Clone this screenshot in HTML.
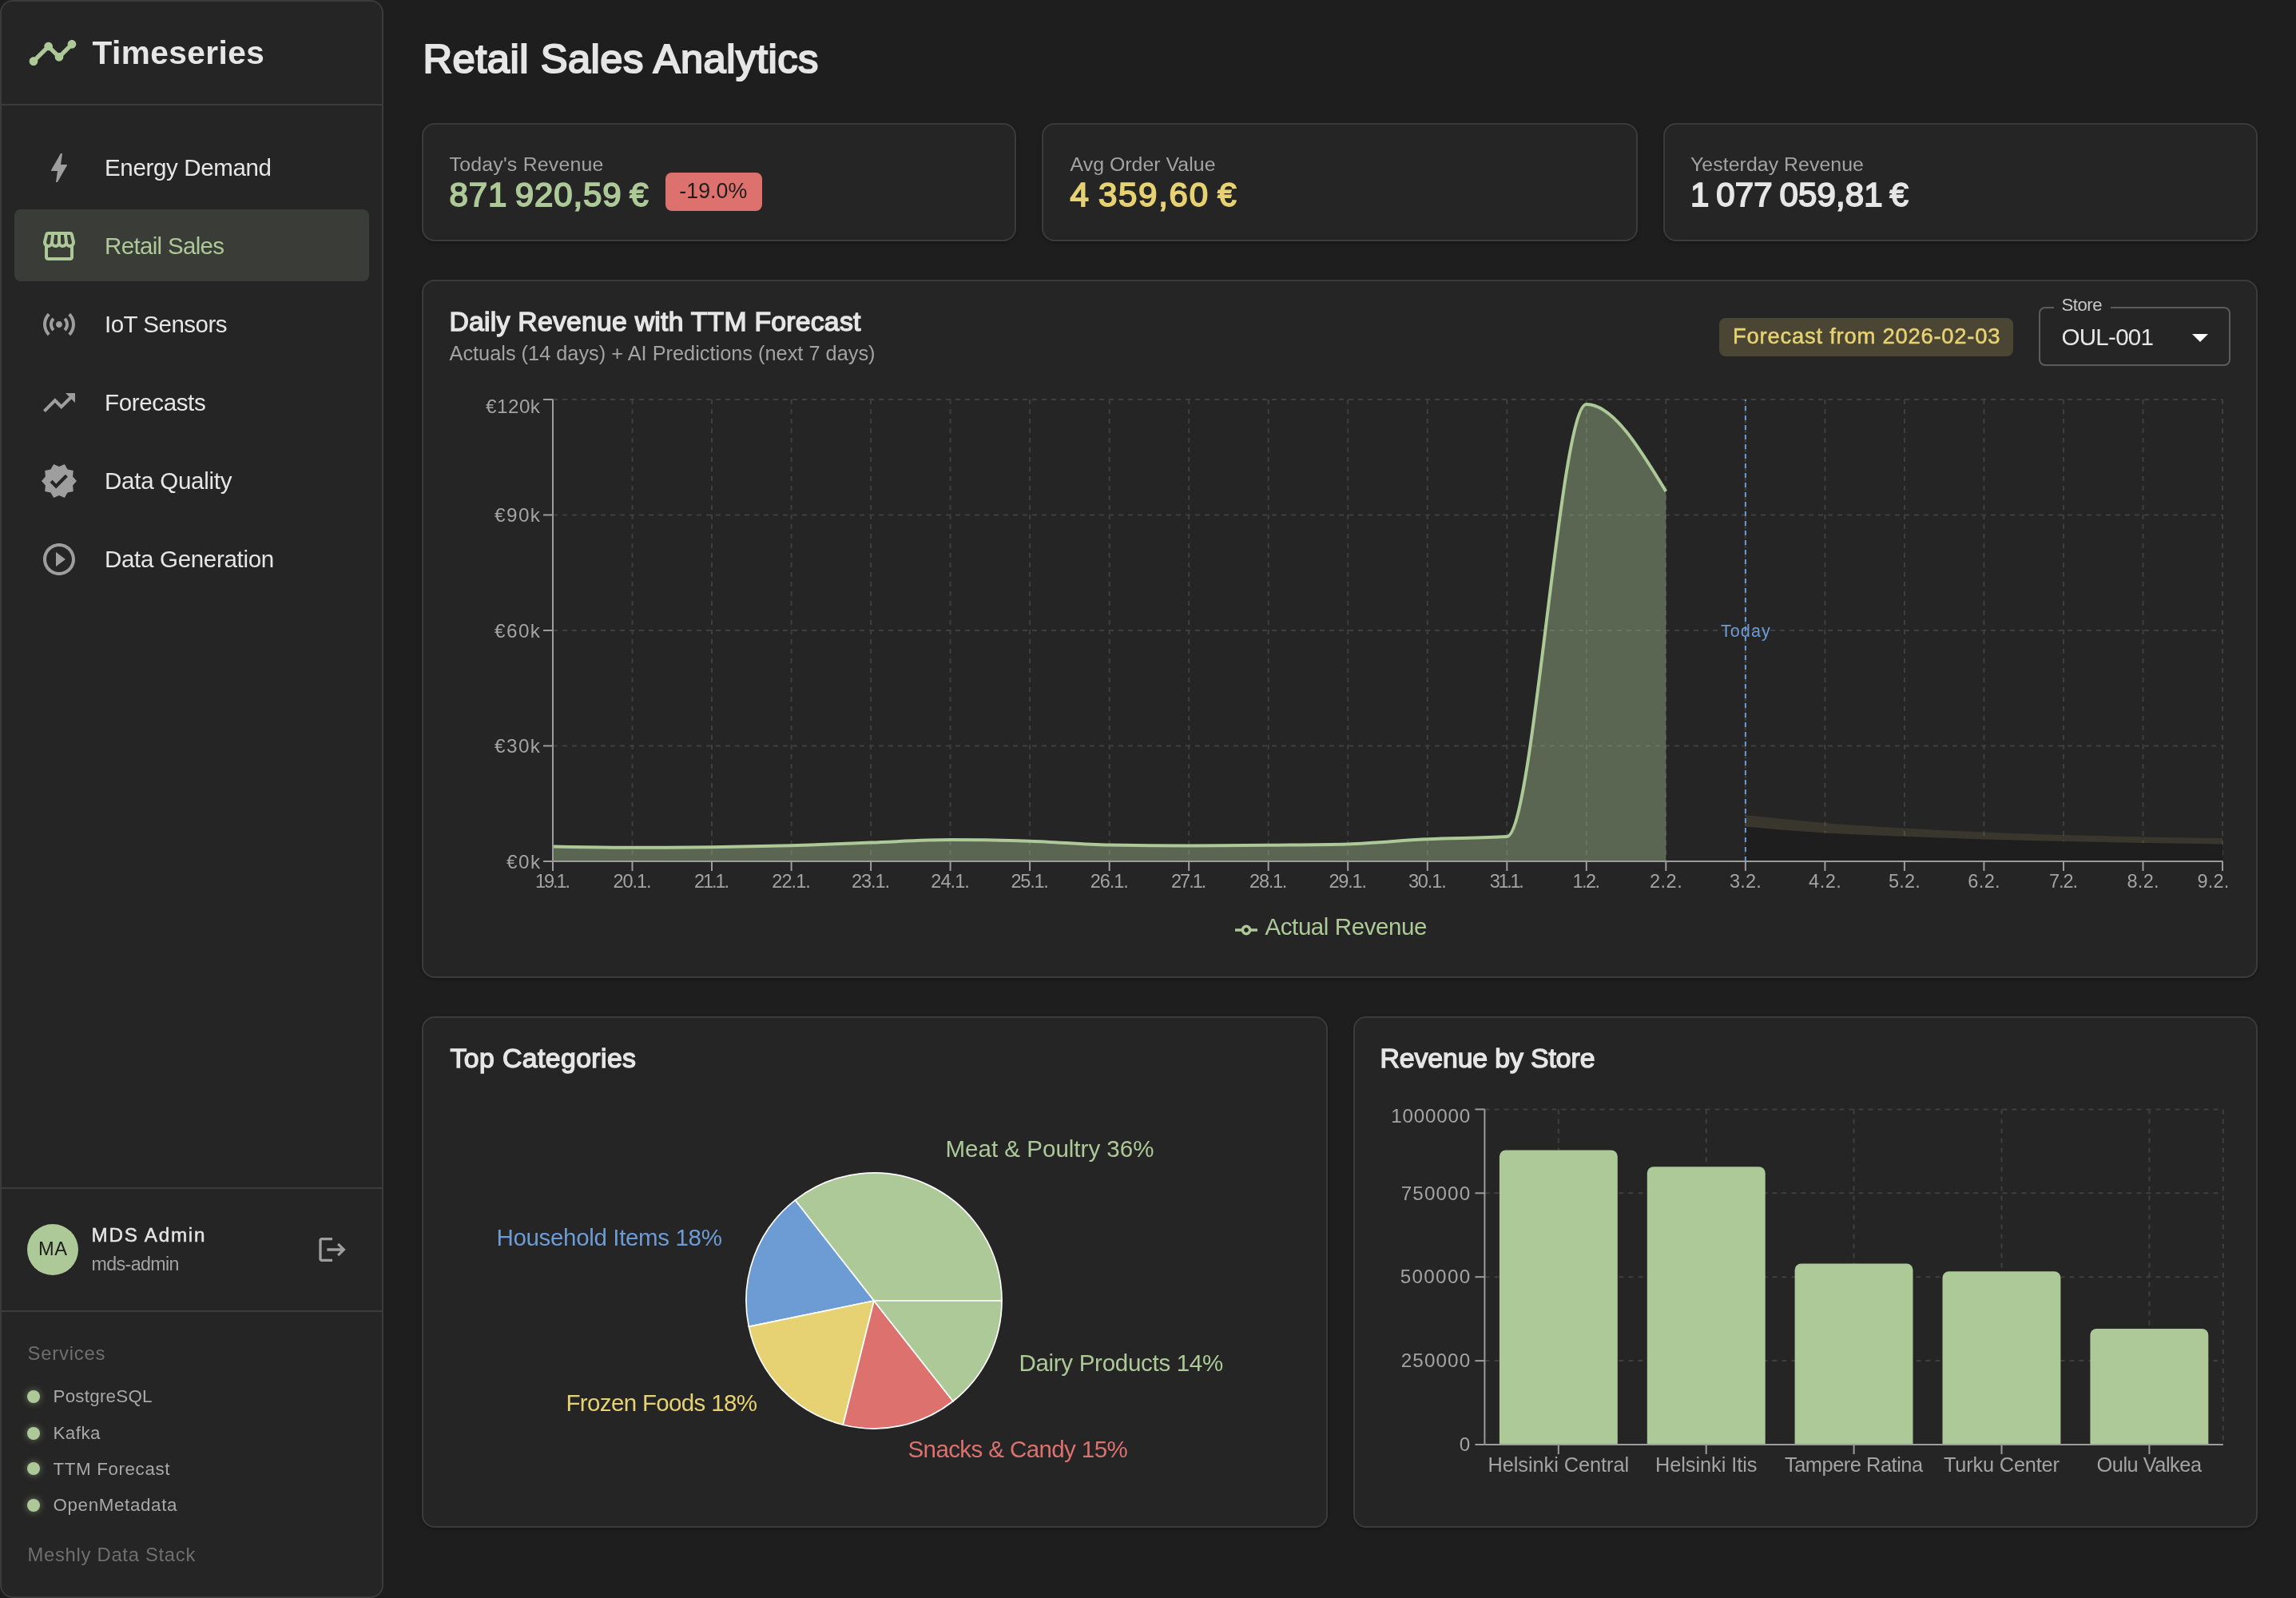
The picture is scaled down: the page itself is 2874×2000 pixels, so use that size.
<!DOCTYPE html>
<html lang="en"><head><meta charset="utf-8"><title>Retail Sales Analytics</title>
<style>
html,body{margin:0;padding:0;background:#1e1e1e;}
body{width:2874px;height:2000px;position:relative;overflow:hidden;font-family:"Liberation Sans",sans-serif;}
div{box-sizing:content-box;}
#app{position:absolute;left:0;top:0;width:2874px;height:2000px;will-change:transform;}
.t{position:absolute;white-space:pre;line-height:1;}
</style></head><body><div id="app">
<div class="" style="position:absolute;left:0px;top:0px;width:476px;height:1996px;background:#252525;border:2px solid #3b3b3b;border-radius:16px;"></div>
<div class="" style="position:absolute;left:2px;top:130px;width:476px;height:2px;background:#3b3b3b;"></div>
<div class="" style="position:absolute;left:2px;top:1486px;width:476px;height:2px;background:#3b3b3b;"></div>
<div class="" style="position:absolute;left:2px;top:1640px;width:476px;height:2px;background:#3b3b3b;"></div>
<svg style="position:absolute;left:34px;top:34px" width="64" height="64" viewBox="0 0 24 24"><path fill="#adc997" d="M23 8c0 1.1-.9 2-2 2-.18 0-.35-.02-.51-.07l-3.56 3.55c.05.16.07.34.07.52 0 1.1-.9 2-2 2s-2-.9-2-2c0-.18.02-.36.07-.52l-2.55-2.55c-.16.05-.34.07-.52.07s-.36-.02-.52-.07l-4.55 4.56c.05.16.07.33.07.51 0 1.1-.9 2-2 2s-2-.9-2-2 .9-2 2-2c.18 0 .35.02.51.07l4.56-4.55C8.02 9.36 8 9.18 8 9c0-1.1.9-2 2-2s2 .9 2 2c0 .18-.02.36-.07.52l2.55 2.55c.16-.05.34-.07.52-.07s.36.02.52.07l3.55-3.56C19.02 8.35 19 8.18 19 8c0-1.1.9-2 2-2s2 .9 2 2z"/></svg>
<div class="t" style="left:115.5px;top:46.1px;font-size:40.6px;color:#e6e6e6;font-weight:700;letter-spacing:0.44px;">Timeseries</div>
<svg style="position:absolute;left:50px;top:186px" width="48" height="48" viewBox="0 0 24 24"><path fill="#9e9e9e" d="M11 21h-1l1-7H7.5c-.58 0-.57-.32-.38-.66.19-.34.05-.08.07-.12C8.48 10.94 10.42 7.54 13 3h1l-1 7h3.5c.49 0 .56.33.47.51l-.07.15C12.96 17.55 11 21 11 21z"/></svg>
<div class="t" style="left:131.0px;top:194.8px;font-size:29.54px;color:#e6e6e6;font-weight:400;letter-spacing:-0.37px;">Energy Demand</div>
<div class="" style="position:absolute;left:18px;top:262px;width:444px;height:90px;background:#3a3d37;border-radius:8px;"></div>
<svg style="position:absolute;left:50px;top:284px" width="48" height="48" viewBox="0 0 24 24"><path fill="#adc997" d="M21.9 8.89l-1.05-4.37c-.22-.9-1-1.52-1.91-1.52H5.05c-.9 0-1.69.63-1.9 1.52L2.1 8.89c-.24 1.02-.02 2.06.62 2.88.08.11.19.19.28.29V19c0 1.1.9 2 2 2h14c1.1 0 2-.9 2-2v-6.94c.09-.09.2-.18.28-.28.64-.82.87-1.87.62-2.89zm-2.99-3.9l1.05 4.37c.1.42.01.84-.25 1.17-.14.18-.44.47-.94.47-.61 0-1.14-.49-1.21-1.14L16.98 5l1.93-.01zM13 5h1.96l.54 4.52c.05.39-.07.78-.33 1.07-.22.26-.54.41-.95.41-.67 0-1.22-.59-1.22-1.31V5zM8.49 9.52L9.04 5H11v4.69c0 .72-.55 1.31-1.29 1.31-.34 0-.65-.15-.89-.41-.25-.29-.37-.68-.33-1.07zm-4.45-.16L5.05 5h1.97l-.58 4.86c-.08.65-.6 1.14-1.21 1.14-.49 0-.8-.29-.93-.47-.27-.32-.36-.75-.26-1.17zM5 19v-6.03c.08.01.15.03.23.03.87 0 1.66-.36 2.24-.95.6.6 1.4.95 2.31.95.87 0 1.65-.36 2.23-.93.59.57 1.39.93 2.29.93.84 0 1.64-.35 2.24-.95.58.59 1.37.95 2.24.95.08 0 .15-.02.23-.03V19H5z"/></svg>
<div class="t" style="left:131.0px;top:292.8px;font-size:29.54px;color:#adc997;font-weight:400;letter-spacing:-0.68px;">Retail Sales</div>
<svg style="position:absolute;left:50px;top:382px" width="48" height="48" viewBox="0 0 24 24"><path fill="#9e9e9e" d="M7.76 16.24C6.67 15.16 6 13.66 6 12s.67-3.16 1.76-4.24l1.42 1.42C8.45 9.9 8 10.9 8 12c0 1.1.45 2.1 1.17 2.83l-1.41 1.41zm8.48 0C17.33 15.16 18 13.66 18 12s-.67-3.16-1.76-4.24l-1.42 1.42C15.55 9.9 16 10.9 16 12c0 1.1-.45 2.1-1.17 2.83l1.41 1.41zM12 10c-1.1 0-2 .9-2 2s.9 2 2 2 2-.9 2-2-.9-2-2-2zm8 2c0 2.21-.9 4.21-2.35 5.65l1.42 1.42C20.88 17.26 22 14.76 22 12s-1.12-5.26-2.93-7.07l-1.42 1.42C19.1 7.79 20 9.79 20 12zM6.35 6.35L4.93 4.93C3.12 6.74 2 9.24 2 12s1.12 5.26 2.93 7.07l1.42-1.42C4.9 16.21 4 14.21 4 12s.9-4.21 2.35-5.65z"/></svg>
<div class="t" style="left:131.0px;top:390.8px;font-size:29.54px;color:#e6e6e6;font-weight:400;letter-spacing:-0.51px;">IoT Sensors</div>
<svg style="position:absolute;left:50px;top:480px" width="48" height="48" viewBox="0 0 24 24"><path fill="#9e9e9e" d="M16 6l2.29 2.29-4.88 4.88-4-4L2 16.59 3.41 18l6-6 4 4 6.3-6.29L22 12V6z"/></svg>
<div class="t" style="left:131.0px;top:488.8px;font-size:29.54px;color:#e6e6e6;font-weight:400;letter-spacing:-0.37px;">Forecasts</div>
<svg style="position:absolute;left:50px;top:578px" width="48" height="48" viewBox="0 0 24 24"><path fill="#9e9e9e" d="M23 12l-2.44-2.79.34-3.69-3.61-.82-1.89-3.2L12 2.96 8.6 1.5 6.71 4.69 3.1 5.5l.34 3.7L1 12l2.44 2.79-.34 3.7 3.61.82L8.6 22.5l3.4-1.47 3.4 1.46 1.89-3.19 3.61-.82-.34-3.69L23 12zm-12.91 4.72l-3.8-3.81 1.48-1.48 2.32 2.33 5.85-5.87 1.48 1.48-7.33 7.35z"/></svg>
<div class="t" style="left:131.0px;top:586.8px;font-size:29.54px;color:#e6e6e6;font-weight:400;letter-spacing:-0.27px;">Data Quality</div>
<svg style="position:absolute;left:50px;top:676px" width="48" height="48" viewBox="0 0 24 24"><path fill="#9e9e9e" d="M10 16.5l6-4.5-6-4.5v9zM12 2C6.48 2 2 6.48 2 12s4.48 10 10 10 10-4.48 10-10S17.52 2 12 2zm0 18c-4.41 0-8-3.59-8-8s3.59-8 8-8 8 3.59 8 8-3.59 8-8 8z"/></svg>
<div class="t" style="left:131.0px;top:684.8px;font-size:29.54px;color:#e6e6e6;font-weight:400;letter-spacing:-0.32px;">Data Generation</div>
<div class="" style="position:absolute;left:34px;top:1532px;width:64px;height:64px;background:#adc997;border-radius:50%;"></div>
<div class="t" style="left:48.0px;top:1552.2px;font-size:23.63px;color:#1e1e1e;font-weight:400;letter-spacing:0.55px;">MA</div>
<div class="t" style="left:114.5px;top:1534.2px;font-size:24.26px;color:#e6e6e6;font-weight:400;letter-spacing:1.74px;-webkit-text-stroke:0.45px #e6e6e6;">MDS Admin</div>
<div class="t" style="left:114.5px;top:1570.9px;font-size:23.21px;color:#a3a3a3;font-weight:400;letter-spacing:-0.60px;">mds-admin</div>
<svg style="position:absolute;left:395.7px;top:1544px" width="40" height="40" viewBox="0 0 24 24"><path fill="#9e9e9e" d="M17 7l-1.41 1.41L18.17 11H8v2h10.17l-2.58 2.58L17 17l5-5zM4 5h8V3H4c-1.1 0-2 .9-2 2v14c0 1.1.9 2 2 2h8v-2H4V5z"/></svg>
<div class="t" style="left:34.5px;top:1681.8px;font-size:23.84px;color:#6f6f6f;font-weight:400;letter-spacing:0.80px;">Services</div>
<div class="" style="position:absolute;left:34px;top:1739.8px;width:16px;height:16px;background:#adc997;border-radius:50%;box-shadow:0 0 8px rgba(173,201,151,.55);"></div>
<div class="t" style="left:66.5px;top:1737.1px;font-size:22.37px;color:#a8a8a8;font-weight:400;letter-spacing:0.24px;">PostgreSQL</div>
<div class="" style="position:absolute;left:34px;top:1785.8px;width:16px;height:16px;background:#adc997;border-radius:50%;box-shadow:0 0 8px rgba(173,201,151,.55);"></div>
<div class="t" style="left:66.5px;top:1783.1px;font-size:22.37px;color:#a8a8a8;font-weight:400;letter-spacing:0.45px;">Kafka</div>
<div class="" style="position:absolute;left:34px;top:1830.3px;width:16px;height:16px;background:#adc997;border-radius:50%;box-shadow:0 0 8px rgba(173,201,151,.55);"></div>
<div class="t" style="left:66.5px;top:1827.6px;font-size:22.37px;color:#a8a8a8;font-weight:400;letter-spacing:0.62px;">TTM Forecast</div>
<div class="" style="position:absolute;left:34px;top:1876.1px;width:16px;height:16px;background:#adc997;border-radius:50%;box-shadow:0 0 8px rgba(173,201,151,.55);"></div>
<div class="t" style="left:66.5px;top:1873.4px;font-size:22.37px;color:#a8a8a8;font-weight:400;letter-spacing:0.64px;">OpenMetadata</div>
<div class="t" style="left:34.5px;top:1933.8px;font-size:23.84px;color:#6f6f6f;font-weight:400;letter-spacing:0.70px;">Meshly Data Stack</div>
<div class="t" style="left:529.5px;top:49.1px;font-size:50.64px;color:#e6e6e6;font-weight:400;letter-spacing:0.52px;-webkit-text-stroke:2.1px #e6e6e6;">Retail Sales Analytics</div>
<div class="" style="position:absolute;left:528px;top:154px;width:740px;height:144px;background:#252525;border:2px solid #3b3b3b;border-radius:16px;box-shadow:0 2px 4px rgba(0,0,0,.25);"></div>
<div class="" style="position:absolute;left:1304px;top:154px;width:742px;height:144px;background:#252525;border:2px solid #3b3b3b;border-radius:16px;box-shadow:0 2px 4px rgba(0,0,0,.25);"></div>
<div class="" style="position:absolute;left:2082px;top:154px;width:740px;height:144px;background:#252525;border:2px solid #3b3b3b;border-radius:16px;box-shadow:0 2px 4px rgba(0,0,0,.25);"></div>
<div class="t" style="left:562.5px;top:193.7px;font-size:24.84px;color:#a3a3a3;font-weight:400;letter-spacing:0.23px;">Today's Revenue</div>
<div class="t" style="left:562.5px;top:223.1px;font-size:42.0px;color:#adc997;font-weight:400;letter-spacing:0.89px;-webkit-text-stroke:1.75px #adc997;word-spacing:-3px;">871 920,59 €</div>
<div class="" style="position:absolute;left:833px;top:216px;width:120.5px;height:48px;background:#dc716e;border-radius:8px;"></div>
<div class="t" style="left:850.2px;top:225.9px;font-size:26.78px;color:#1e1e1e;font-weight:400;letter-spacing:0.07px;">-19.0%</div>
<div class="t" style="left:1339.5px;top:193.7px;font-size:24.84px;color:#a3a3a3;font-weight:400;letter-spacing:0.05px;">Avg Order Value</div>
<div class="t" style="left:1339.5px;top:223.1px;font-size:42.0px;color:#e7d273;font-weight:400;letter-spacing:1.72px;-webkit-text-stroke:1.75px #e7d273;word-spacing:-3px;">4 359,60 €</div>
<div class="t" style="left:2116.0px;top:193.7px;font-size:24.84px;color:#a3a3a3;font-weight:400;letter-spacing:0.07px;">Yesterday Revenue</div>
<div class="t" style="left:2116.0px;top:223.1px;font-size:42.0px;color:#e6e6e6;font-weight:400;letter-spacing:0.13px;-webkit-text-stroke:1.75px #e6e6e6;word-spacing:-3px;">1 077 059,81 €</div>
<div class="" style="position:absolute;left:528px;top:350px;width:2294px;height:870px;background:#252525;border:2px solid #3b3b3b;border-radius:16px;box-shadow:0 2px 4px rgba(0,0,0,.25);"></div>
<div class="t" style="left:562.5px;top:386.4px;font-size:33.76px;color:#e6e6e6;font-weight:400;letter-spacing:0.24px;-webkit-text-stroke:1.4px #e6e6e6;">Daily Revenue with TTM Forecast</div>
<div class="t" style="left:562.5px;top:429.6px;font-size:25.32px;color:#a3a3a3;font-weight:400;letter-spacing:0.01px;">Actuals (14 days) + AI Predictions (next 7 days)</div>
<div class="" style="position:absolute;left:2152px;top:398px;width:368px;height:48px;background:#4a4633;border-radius:8px;"></div>
<div class="t" style="left:2169.0px;top:407.1px;font-size:27.43px;color:#e7d273;font-weight:400;letter-spacing:0.76px;-webkit-text-stroke:0.5px #e7d273;">Forecast from 2026-02-03</div>
<div class="" style="position:absolute;left:2552px;top:384px;width:236px;height:70px;border:2px solid #5c5c5c;border-radius:8px;"></div>
<div class="" style="position:absolute;left:2570.5px;top:380px;width:71px;height:10px;background:#252525;"></div>
<div class="t" style="left:2580.5px;top:370.5px;font-size:22.15px;color:#c8c8c8;font-weight:400;letter-spacing:-0.49px;">Store</div>
<div class="t" style="left:2580.5px;top:407.2px;font-size:29.54px;color:#e6e6e6;font-weight:400;letter-spacing:-0.73px;">OUL-001</div>
<svg style="position:absolute;left:2730px;top:398px" width="48" height="48" viewBox="0 0 24 24"><path fill="#ffffff" d="M7 10l5 5 5-5z"/></svg>
<svg style="position:absolute;left:0;top:0" width="2874" height="2000" viewBox="0 0 2874 2000"><g stroke="#3f3f3f" stroke-width="2" stroke-dasharray="6 6" fill="none"><line x1="692.0" y1="933.5" x2="2782.0" y2="933.5"/><line x1="692.0" y1="789.0" x2="2782.0" y2="789.0"/><line x1="692.0" y1="644.5" x2="2782.0" y2="644.5"/><line x1="692.0" y1="500.0" x2="2782.0" y2="500.0"/><line x1="791.5" y1="500.0" x2="791.5" y2="1078.0"/><line x1="891.0" y1="500.0" x2="891.0" y2="1078.0"/><line x1="990.6" y1="500.0" x2="990.6" y2="1078.0"/><line x1="1090.1" y1="500.0" x2="1090.1" y2="1078.0"/><line x1="1189.6" y1="500.0" x2="1189.6" y2="1078.0"/><line x1="1289.1" y1="500.0" x2="1289.1" y2="1078.0"/><line x1="1388.7" y1="500.0" x2="1388.7" y2="1078.0"/><line x1="1488.2" y1="500.0" x2="1488.2" y2="1078.0"/><line x1="1587.7" y1="500.0" x2="1587.7" y2="1078.0"/><line x1="1687.2" y1="500.0" x2="1687.2" y2="1078.0"/><line x1="1786.8" y1="500.0" x2="1786.8" y2="1078.0"/><line x1="1886.3" y1="500.0" x2="1886.3" y2="1078.0"/><line x1="1985.8" y1="500.0" x2="1985.8" y2="1078.0"/><line x1="2085.3" y1="500.0" x2="2085.3" y2="1078.0"/><line x1="2184.9" y1="500.0" x2="2184.9" y2="1078.0"/><line x1="2284.4" y1="500.0" x2="2284.4" y2="1078.0"/><line x1="2383.9" y1="500.0" x2="2383.9" y2="1078.0"/><line x1="2483.4" y1="500.0" x2="2483.4" y2="1078.0"/><line x1="2583.0" y1="500.0" x2="2583.0" y2="1078.0"/><line x1="2682.5" y1="500.0" x2="2682.5" y2="1078.0"/><line x1="2782.0" y1="500.0" x2="2782.0" y2="1078.0"/></g><path d="M692.00,1059.60C725.17,1060.20,758.35,1060.80,791.52,1060.80C824.70,1060.80,857.87,1060.60,891.05,1060.20C924.22,1059.80,957.40,1059.23,990.57,1058.30C1023.75,1057.37,1056.92,1055.80,1090.10,1054.60C1123.27,1053.40,1156.44,1051.10,1189.62,1051.10C1222.79,1051.10,1255.97,1051.63,1289.14,1052.70C1322.32,1053.77,1355.49,1056.93,1388.67,1057.60C1421.84,1058.27,1455.02,1058.60,1488.19,1058.60C1521.37,1058.60,1554.54,1058.07,1587.71,1057.70C1620.89,1057.33,1654.06,1057.27,1687.24,1056.40C1720.41,1055.53,1753.59,1051.77,1786.76,1050.20C1819.94,1048.63,1853.11,1049.13,1886.29,1047.00C1919.46,1044.87,1952.63,506.00,1985.81,506.00C2018.98,506.00,2052.16,560.50,2085.33,615.00L2085.33,1078.0L692.00,1078.0Z" fill="#adc997" fill-opacity="0.4"/><path d="M692.00,1059.60C725.17,1060.20,758.35,1060.80,791.52,1060.80C824.70,1060.80,857.87,1060.60,891.05,1060.20C924.22,1059.80,957.40,1059.23,990.57,1058.30C1023.75,1057.37,1056.92,1055.80,1090.10,1054.60C1123.27,1053.40,1156.44,1051.10,1189.62,1051.10C1222.79,1051.10,1255.97,1051.63,1289.14,1052.70C1322.32,1053.77,1355.49,1056.93,1388.67,1057.60C1421.84,1058.27,1455.02,1058.60,1488.19,1058.60C1521.37,1058.60,1554.54,1058.07,1587.71,1057.70C1620.89,1057.33,1654.06,1057.27,1687.24,1056.40C1720.41,1055.53,1753.59,1051.77,1786.76,1050.20C1819.94,1048.63,1853.11,1049.13,1886.29,1047.00C1919.46,1044.87,1952.63,506.00,1985.81,506.00C2018.98,506.00,2052.16,560.50,2085.33,615.00" fill="none" stroke="#adc997" stroke-width="4" stroke-linejoin="round"/><path d="M2184.86,1020.00C2218.03,1023.62,2251.21,1027.25,2284.38,1030.00C2317.56,1032.75,2350.73,1034.58,2383.90,1036.50C2417.08,1038.42,2450.25,1040.08,2483.43,1041.50C2516.60,1042.92,2549.78,1044.00,2582.95,1045.00C2616.13,1046.00,2649.30,1046.83,2682.48,1047.50C2715.65,1048.17,2748.83,1048.58,2782.00,1049.00L2782.00,1078.0L2184.86,1078.0Z" fill="#e7d273" fill-opacity="0.1"/><path d="M2184.86,1034.80C2218.03,1037.63,2251.21,1040.47,2284.38,1042.50C2317.56,1044.53,2350.73,1045.67,2383.90,1047.00C2417.08,1048.33,2450.25,1049.50,2483.43,1050.50C2516.60,1051.50,2549.78,1052.25,2582.95,1053.00C2616.13,1053.75,2649.30,1054.43,2682.48,1055.00C2715.65,1055.57,2748.83,1055.98,2782.00,1056.40L2782.00,1078.0L2184.86,1078.0Z" fill="#1e1e1e"/><line x1="2184.9" y1="1078.0" x2="2184.9" y2="500.0" stroke="#6d9bd3" stroke-width="2" stroke-dasharray="6 6"/><g stroke="#9c9c9c" stroke-width="2" fill="none"><line x1="692.0" y1="500.0" x2="692.0" y2="1078.0"/><line x1="692.0" y1="1078.0" x2="2782.0" y2="1078.0"/><line x1="680.0" y1="1078.0" x2="692.0" y2="1078.0"/><line x1="680.0" y1="933.5" x2="692.0" y2="933.5"/><line x1="680.0" y1="789.0" x2="692.0" y2="789.0"/><line x1="680.0" y1="644.5" x2="692.0" y2="644.5"/><line x1="680.0" y1="500.0" x2="692.0" y2="500.0"/><line x1="692.0" y1="1078.0" x2="692.0" y2="1090.0"/><line x1="791.5" y1="1078.0" x2="791.5" y2="1090.0"/><line x1="891.0" y1="1078.0" x2="891.0" y2="1090.0"/><line x1="990.6" y1="1078.0" x2="990.6" y2="1090.0"/><line x1="1090.1" y1="1078.0" x2="1090.1" y2="1090.0"/><line x1="1189.6" y1="1078.0" x2="1189.6" y2="1090.0"/><line x1="1289.1" y1="1078.0" x2="1289.1" y2="1090.0"/><line x1="1388.7" y1="1078.0" x2="1388.7" y2="1090.0"/><line x1="1488.2" y1="1078.0" x2="1488.2" y2="1090.0"/><line x1="1587.7" y1="1078.0" x2="1587.7" y2="1090.0"/><line x1="1687.2" y1="1078.0" x2="1687.2" y2="1090.0"/><line x1="1786.8" y1="1078.0" x2="1786.8" y2="1090.0"/><line x1="1886.3" y1="1078.0" x2="1886.3" y2="1090.0"/><line x1="1985.8" y1="1078.0" x2="1985.8" y2="1090.0"/><line x1="2085.3" y1="1078.0" x2="2085.3" y2="1090.0"/><line x1="2184.9" y1="1078.0" x2="2184.9" y2="1090.0"/><line x1="2284.4" y1="1078.0" x2="2284.4" y2="1090.0"/><line x1="2383.9" y1="1078.0" x2="2383.9" y2="1090.0"/><line x1="2483.4" y1="1078.0" x2="2483.4" y2="1090.0"/><line x1="2583.0" y1="1078.0" x2="2583.0" y2="1090.0"/><line x1="2682.5" y1="1078.0" x2="2682.5" y2="1090.0"/><line x1="2782.0" y1="1078.0" x2="2782.0" y2="1090.0"/></g></svg>
<div class="t" style="left:634.0px;top:1066.8px;font-size:24.24px;color:#a3a3a3;font-weight:400;letter-spacing:1.46px;">€0k</div>
<div class="t" style="left:619.0px;top:922.3px;font-size:24.24px;color:#a3a3a3;font-weight:400;letter-spacing:1.48px;">€30k</div>
<div class="t" style="left:619.0px;top:777.8px;font-size:24.24px;color:#a3a3a3;font-weight:400;letter-spacing:1.48px;">€60k</div>
<div class="t" style="left:619.0px;top:633.3px;font-size:24.24px;color:#a3a3a3;font-weight:400;letter-spacing:1.48px;">€90k</div>
<div class="t" style="left:608.0px;top:496.8px;font-size:24.24px;color:#a3a3a3;font-weight:400;letter-spacing:0.49px;">€120k</div>
<div class="t" style="left:669.9px;top:1092.1px;font-size:23.52px;color:#a3a3a3;font-weight:400;letter-spacing:-2.03px;">19.1.</div>
<div class="t" style="left:767.5px;top:1092.1px;font-size:23.52px;color:#a3a3a3;font-weight:400;letter-spacing:-1.08px;">20.1.</div>
<div class="t" style="left:869.1px;top:1092.1px;font-size:23.52px;color:#a3a3a3;font-weight:400;letter-spacing:-2.10px;">21.1.</div>
<div class="t" style="left:966.3px;top:1092.1px;font-size:23.52px;color:#a3a3a3;font-weight:400;letter-spacing:-0.93px;">22.1.</div>
<div class="t" style="left:1066.1px;top:1092.1px;font-size:23.52px;color:#a3a3a3;font-weight:400;letter-spacing:-1.08px;">23.1.</div>
<div class="t" style="left:1165.3px;top:1092.1px;font-size:23.52px;color:#a3a3a3;font-weight:400;letter-spacing:-0.93px;">24.1.</div>
<div class="t" style="left:1265.5px;top:1092.1px;font-size:23.52px;color:#a3a3a3;font-weight:400;letter-spacing:-1.25px;">25.1.</div>
<div class="t" style="left:1364.7px;top:1092.1px;font-size:23.52px;color:#a3a3a3;font-weight:400;letter-spacing:-1.08px;">26.1.</div>
<div class="t" style="left:1466.0px;top:1092.1px;font-size:23.52px;color:#a3a3a3;font-weight:400;letter-spacing:-1.98px;">27.1.</div>
<div class="t" style="left:1564.1px;top:1092.1px;font-size:23.52px;color:#a3a3a3;font-weight:400;letter-spacing:-1.25px;">28.1.</div>
<div class="t" style="left:1663.4px;top:1092.1px;font-size:23.52px;color:#a3a3a3;font-weight:400;letter-spacing:-1.18px;">29.1.</div>
<div class="t" style="left:1762.9px;top:1092.1px;font-size:23.52px;color:#a3a3a3;font-weight:400;letter-spacing:-1.13px;">30.1.</div>
<div class="t" style="left:1864.7px;top:1092.1px;font-size:23.52px;color:#a3a3a3;font-weight:400;letter-spacing:-2.30px;">31.1.</div>
<div class="t" style="left:1968.6px;top:1092.1px;font-size:23.52px;color:#a3a3a3;font-weight:400;letter-spacing:-1.58px;">1.2.</div>
<div class="t" style="left:2064.9px;top:1092.1px;font-size:23.52px;color:#a3a3a3;font-weight:400;letter-spacing:0.56px;">2.2.</div>
<div class="t" style="left:2164.9px;top:1092.1px;font-size:23.52px;color:#a3a3a3;font-weight:400;letter-spacing:0.26px;">3.2.</div>
<div class="t" style="left:2264.1px;top:1092.1px;font-size:23.52px;color:#a3a3a3;font-weight:400;letter-spacing:0.46px;">4.2.</div>
<div class="t" style="left:2363.9px;top:1092.1px;font-size:23.52px;color:#a3a3a3;font-weight:400;letter-spacing:0.26px;">5.2.</div>
<div class="t" style="left:2463.3px;top:1092.1px;font-size:23.52px;color:#a3a3a3;font-weight:400;letter-spacing:0.36px;">6.2.</div>
<div class="t" style="left:2564.9px;top:1092.1px;font-size:23.52px;color:#a3a3a3;font-weight:400;letter-spacing:-1.04px;">7.2.</div>
<div class="t" style="left:2662.5px;top:1092.1px;font-size:23.52px;color:#a3a3a3;font-weight:400;letter-spacing:0.26px;">8.2.</div>
<div class="t" style="left:2750.4px;top:1092.1px;font-size:23.52px;color:#a3a3a3;font-weight:400;letter-spacing:0.26px;">9.2.</div>
<div class="t" style="left:2153.9px;top:779.3px;font-size:21.63px;color:#6d9bd3;font-weight:400;letter-spacing:1.07px;">Today</div>
<svg style="position:absolute;left:1545px;top:1149.6px" width="30" height="28" viewBox="0 0 32 32"><path stroke-width="4" fill="none" stroke="#adc997" d="M0,16h10.67A5.33,5.33,0,1,1,21.33,16H32M21.33,16A5.33,5.33,0,1,1,10.67,16"/></svg>
<div class="t" style="left:1583.5px;top:1145.1px;font-size:29.54px;color:#adc997;font-weight:400;letter-spacing:-0.43px;">Actual Revenue</div>
<div class="" style="position:absolute;left:528px;top:1272px;width:1130px;height:636px;background:#252525;border:2px solid #3b3b3b;border-radius:16px;box-shadow:0 2px 4px rgba(0,0,0,.25);"></div>
<div class="" style="position:absolute;left:1694px;top:1272px;width:1128px;height:636px;background:#252525;border:2px solid #3b3b3b;border-radius:16px;box-shadow:0 2px 4px rgba(0,0,0,.25);"></div>
<div class="t" style="left:563.5px;top:1307.9px;font-size:33.76px;color:#e6e6e6;font-weight:400;letter-spacing:0.42px;-webkit-text-stroke:1.4px #e6e6e6;">Top Categories</div>
<div class="t" style="left:1727.5px;top:1307.9px;font-size:33.76px;color:#e6e6e6;font-weight:400;letter-spacing:-0.08px;-webkit-text-stroke:1.4px #e6e6e6;">Revenue by Store</div>
<svg style="position:absolute;left:0;top:0" width="2874" height="2000" viewBox="0 0 2874 2000"><path d="M1094.0,1628.0L1254.00,1628.00A160.0,160.0,0,0,0,995.27,1502.09Z" fill="#adc997" stroke="#fff" stroke-width="1.7" stroke-linejoin="round"/><path d="M1094.0,1628.0L995.27,1502.09A160.0,160.0,0,0,0,937.32,1660.45Z" fill="#6d9bd3" stroke="#fff" stroke-width="1.7" stroke-linejoin="round"/><path d="M1094.0,1628.0L937.32,1660.45A160.0,160.0,0,0,0,1055.29,1783.25Z" fill="#e7d273" stroke="#fff" stroke-width="1.7" stroke-linejoin="round"/><path d="M1094.0,1628.0L1055.29,1783.25A160.0,160.0,0,0,0,1192.95,1753.74Z" fill="#dc716e" stroke="#fff" stroke-width="1.7" stroke-linejoin="round"/><path d="M1094.0,1628.0L1192.95,1753.74A160.0,160.0,0,0,0,1254.00,1628.00Z" fill="#adc997" stroke="#fff" stroke-width="1.7" stroke-linejoin="round"/></svg>
<svg style="position:absolute;left:0;top:0" width="2874" height="2000" viewBox="0 0 2874 2000"><g stroke="#3f3f3f" stroke-width="2" stroke-dasharray="6 6" fill="none"><line x1="1858.4" y1="1703.1" x2="2782.8" y2="1703.1"/><line x1="1858.4" y1="1598.2" x2="2782.8" y2="1598.2"/><line x1="1858.4" y1="1493.3" x2="2782.8" y2="1493.3"/><line x1="1858.4" y1="1388.4" x2="2782.8" y2="1388.4"/><line x1="1950.8" y1="1388.4" x2="1950.8" y2="1808.0"/><line x1="2135.7" y1="1388.4" x2="2135.7" y2="1808.0"/><line x1="2320.6" y1="1388.4" x2="2320.6" y2="1808.0"/><line x1="2505.5" y1="1388.4" x2="2505.5" y2="1808.0"/><line x1="2690.4" y1="1388.4" x2="2690.4" y2="1808.0"/><line x1="2782.8" y1="1388.4" x2="2782.8" y2="1808.0"/></g><path fill="#adc997" d="M1876.9,1808.0V1447.4a8,8 0 0 1 8,-8h131.9a8,8 0 0 1 8,8V1808.0Z"/><path fill="#adc997" d="M2061.8,1808.0V1468.2a8,8 0 0 1 8,-8h131.9a8,8 0 0 1 8,8V1808.0Z"/><path fill="#adc997" d="M2246.6,1808.0V1589.4a8,8 0 0 1 8,-8h131.9a8,8 0 0 1 8,8V1808.0Z"/><path fill="#adc997" d="M2431.5,1808.0V1599.2a8,8 0 0 1 8,-8h131.9a8,8 0 0 1 8,8V1808.0Z"/><path fill="#adc997" d="M2616.4,1808.0V1671.0a8,8 0 0 1 8,-8h131.9a8,8 0 0 1 8,8V1808.0Z"/><g stroke="#9c9c9c" stroke-width="2" fill="none"><line x1="1858.4" y1="1388.4" x2="1858.4" y2="1808.0"/><line x1="1858.4" y1="1808.0" x2="2782.8" y2="1808.0"/><line x1="1846.4" y1="1808.0" x2="1858.4" y2="1808.0"/><line x1="1846.4" y1="1703.1" x2="1858.4" y2="1703.1"/><line x1="1846.4" y1="1598.2" x2="1858.4" y2="1598.2"/><line x1="1846.4" y1="1493.3" x2="1858.4" y2="1493.3"/><line x1="1846.4" y1="1388.4" x2="1858.4" y2="1388.4"/><line x1="1950.8" y1="1808.0" x2="1950.8" y2="1820.0"/><line x1="2135.7" y1="1808.0" x2="2135.7" y2="1820.0"/><line x1="2320.6" y1="1808.0" x2="2320.6" y2="1820.0"/><line x1="2505.5" y1="1808.0" x2="2505.5" y2="1820.0"/><line x1="2690.4" y1="1808.0" x2="2690.4" y2="1820.0"/></g></svg>
<div class="t" style="left:1183.5px;top:1422.8px;font-size:29.54px;color:#adc997;font-weight:400;letter-spacing:-0.00px;">Meat &amp; Poultry 36%</div>
<div class="t" style="left:621.5px;top:1533.6px;font-size:29.54px;color:#6d9bd3;font-weight:400;letter-spacing:-0.36px;">Household Items 18%</div>
<div class="t" style="left:1275.4px;top:1691.3px;font-size:29.54px;color:#adc997;font-weight:400;letter-spacing:-0.30px;">Dairy Products 14%</div>
<div class="t" style="left:708.5px;top:1741.0px;font-size:29.54px;color:#e7d273;font-weight:400;letter-spacing:-0.67px;">Frozen Foods 18%</div>
<div class="t" style="left:1136.5px;top:1799.4px;font-size:29.54px;color:#dc716e;font-weight:400;letter-spacing:-0.61px;">Snacks &amp; Candy 15%</div>
<div class="t" style="left:1826.7px;top:1796.2px;font-size:24.24px;color:#a3a3a3;font-weight:400;letter-spacing:0.00px;">0</div>
<div class="t" style="left:1753.7px;top:1691.3px;font-size:24.24px;color:#a3a3a3;font-weight:400;letter-spacing:1.12px;">250000</div>
<div class="t" style="left:1752.7px;top:1586.4px;font-size:24.24px;color:#a3a3a3;font-weight:400;letter-spacing:1.32px;">500000</div>
<div class="t" style="left:1753.7px;top:1481.5px;font-size:24.24px;color:#a3a3a3;font-weight:400;letter-spacing:1.12px;">750000</div>
<div class="t" style="left:1741.2px;top:1384.6px;font-size:24.24px;color:#a3a3a3;font-weight:400;letter-spacing:0.77px;">1000000</div>
<div class="t" style="left:1862.4px;top:1820.8px;font-size:25.32px;color:#a3a3a3;font-weight:400;letter-spacing:-0.03px;">Helsinki Central</div>
<div class="t" style="left:2072.0px;top:1820.8px;font-size:25.32px;color:#a3a3a3;font-weight:400;letter-spacing:-0.05px;">Helsinki Itis</div>
<div class="t" style="left:2234.0px;top:1820.8px;font-size:25.32px;color:#a3a3a3;font-weight:400;letter-spacing:-0.43px;">Tampere Ratina</div>
<div class="t" style="left:2433.0px;top:1820.8px;font-size:25.32px;color:#a3a3a3;font-weight:400;letter-spacing:-0.17px;">Turku Center</div>
<div class="t" style="left:2624.6px;top:1820.8px;font-size:25.32px;color:#a3a3a3;font-weight:400;letter-spacing:-0.46px;">Oulu Valkea</div>
</div></body></html>
